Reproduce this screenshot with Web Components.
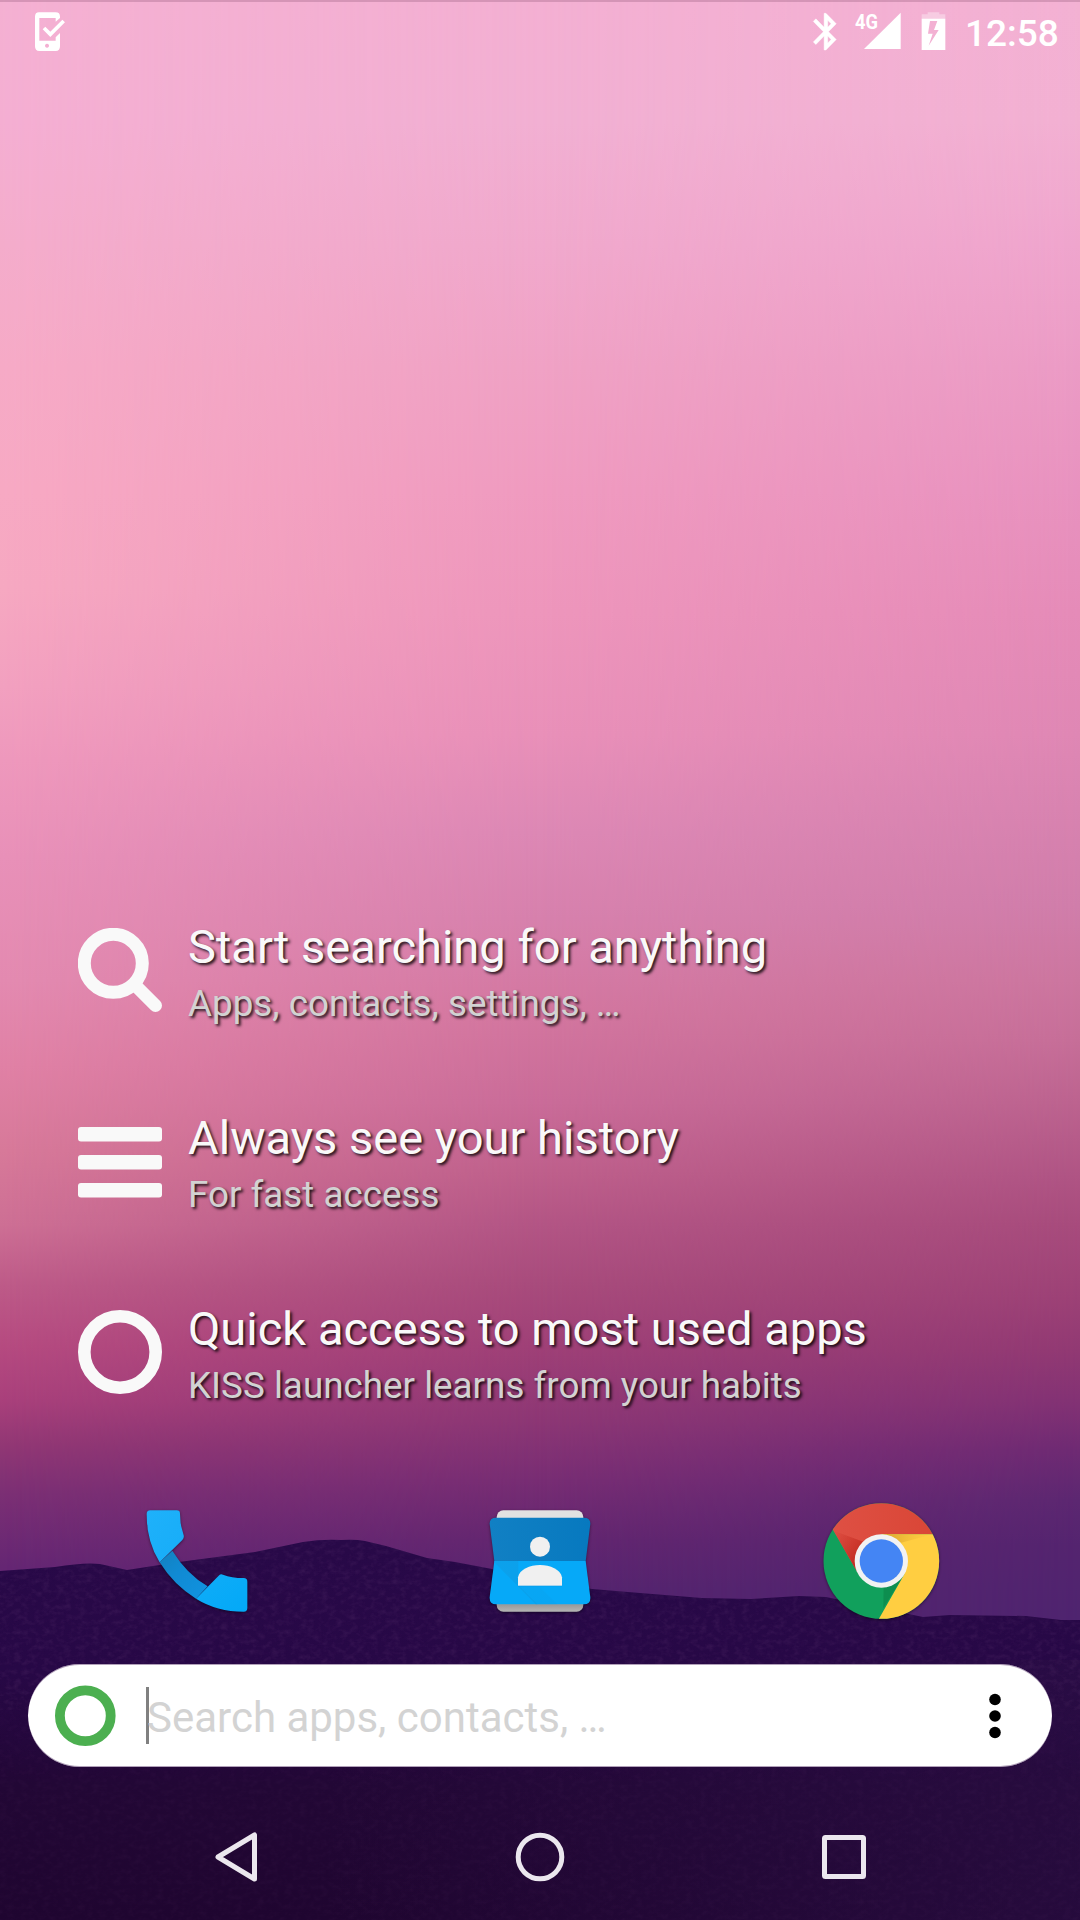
<!DOCTYPE html>
<html lang="en">
<head>
<meta charset="utf-8">
<title>KISS launcher</title>
<style>
html, body { margin: 0; padding: 0; }
body { width: 1080px; height: 1920px; overflow: hidden; font-family: Roboto, "Noto Sans", sans-serif; }
</style>
</head>
<body>
<home-screen>
  <wall-paper slot="wallpaper"></wall-paper>
  <status-bar time="12:58" network="4G"></status-bar>
  <hint-list>
    <hint-row icon="search"><span slot="title">Start searching for anything</span><span slot="detail">Apps, contacts, settings, …</span></hint-row>
    <hint-row icon="menu"><span slot="title">Always see your history</span><span slot="detail">For fast access</span></hint-row>
    <hint-row icon="ring"><span slot="title">Quick access to most used apps</span><span slot="detail">KISS launcher learns from your habits</span></hint-row>
  </hint-list>
  <app-dock></app-dock>
  <search-bar>Search apps, contacts, …</search-bar>
  <nav-bar></nav-bar>
</home-screen>
<script>
function define(name, html, fill) {
  const t = document.createElement('template');
  t.innerHTML = html;
  customElements.define(name, class extends HTMLElement {
    constructor() {
      super();
      this.attachShadow({ mode: 'open' }).appendChild(t.content.cloneNode(true));
    }
    connectedCallback() { if (fill) fill(this, this.shadowRoot); }
  });
}

define('home-screen', `
<style>
:host { display: grid; width: 1080px; height: 1920px; overflow: hidden; }
::slotted([slot=wallpaper]), .column { grid-area: 1 / 1; }
::slotted([slot=wallpaper]) { isolation: isolate; }
.column { display: flex; flex-direction: column; z-index: 1; }
</style>
<slot name="wallpaper"></slot>
<div class="column"><slot></slot></div>`);

define('wall-paper', `
<style>
:host { display: grid; width: 1080px; height: 1920px; }
.sky, svg, .edge { grid-area: 1 / 1; width: 1080px; height: 1920px; }
.mid { background: linear-gradient(180deg, #f4b0d3 0, #f2b0d3 122px, #f1a9cd 245px, #f0a2c5 367px, #f09bc0 490px, #ee96bc 612px, #e990b9 735px, #dd88b5 833px, #d781ad 918px, #d3769f 1016px, #ca6c99 1102px, #be5f8b 1176px, #b35585 1225px, #a84b7c 1286px, #9f4077 1347px, #8d3775 1420px, #782d74 1480px, #632670 1540px, #55246f 1592px); }
.left { background: linear-gradient(180deg, #f4b0d2 0, #f4aed2 122px, #f4accb 245px, #f6aac6 367px, #f7a9c3 490px, #f6a8c1 588px, #f2a0bf 686px, #ee98bc 760px, #e890b8 857px, #e38ab0 980px, #e081a5 1065px, #d77999 1151px, #cd6f94 1225px, #bd5a88 1286px, #b54a80 1347px, #a9407b 1400px, #913774 1445px, #7b2f74 1494px, #652673 1567px);
  -webkit-mask-image: linear-gradient(90deg, #000, transparent 50%); mask-image: linear-gradient(90deg, #000, transparent 50%); }
.right { background: linear-gradient(180deg, #f3b1d3 0, #f2b0d2 122px, #efa5cd 245px, #eb9bc5 367px, #e892bf 490px, #e58bb8 612px, #df87b4 735px, #d883b0 808px, #d07daa 906px, #cc769f 980px, #c66e98 1041px, #bc638f 1102px, #af5484 1176px, #a74b7c 1225px, #9c4176 1298px, #913973 1350px, #833274 1400px, #6e2a73 1450px, #5c2771 1500px, #54246f 1545px, #4f246f 1616px);
  -webkit-mask-image: linear-gradient(90deg, transparent 50%, #000); mask-image: linear-gradient(90deg, transparent 50%, #000); }
svg { z-index: 1; }
.edge { z-index: 2; height: 2px; background: rgba(90, 40, 70, .2); }
</style>
<div class="sky mid"></div><div class="sky left"></div><div class="sky right"></div>
<svg viewBox="0 0 1080 1920">
  <defs>
    <linearGradient id="g" gradientUnits="userSpaceOnUse" x1="0" y1="1540" x2="0" y2="1920">
      <stop offset="0" stop-color="#280948"/><stop offset=".35" stop-color="#270846"/><stop offset=".65" stop-color="#220735"/><stop offset="1" stop-color="#1f0530"/>
    </linearGradient>
    <linearGradient id="r" x1="0" x2="1" y1="0" y2="0">
      <stop offset=".3" stop-color="#2a0e44" stop-opacity="0"/><stop offset="1" stop-color="#2a0e44" stop-opacity=".6"/>
    </linearGradient>
    <filter id="n" x="0" y="0" width="1" height="1">
      <feTurbulence type="fractalNoise" baseFrequency=".14 .2" numOctaves="3" seed="4"/>
      <feColorMatrix values="0 0 0 0 .4  0 0 0 0 .15  0 0 0 0 .4  .9 0 0 0 -.36"/>
    </filter>
    <clipPath id="c"><path d="M0 1571L55 1567Q85 1562 100 1564L127 1570 179 1562 255 1552 303 1542Q322 1539 341 1540 355 1539 365 1541L386 1546 427 1558 455 1562 492 1569 540 1580 592 1589 640 1593 702 1598 751 1599 799 1596 826 1597 923 1617 950 1615 1026 1616 1061 1620 1080 1620V1920H0Z"/></clipPath>
  </defs>
  <g clip-path="url(#c)">
    <rect y="1530" width="1080" height="390" fill="url(#g)"/>
    <rect y="1660" width="1080" height="260" fill="url(#r)"/>
    <rect y="1530" width="1080" height="180" filter="url(#n)" opacity=".24"/>
    <rect y="1710" width="1080" height="210" filter="url(#n)" opacity=".1"/>
  </g>
</svg>
<div class="edge"></div>`);

define('status-bar', `
<style>
:host { display: flex; height: 64px; flex: none; align-items: flex-start; color: #fff; }
svg { display: block; flex: none; }
.check { margin-left: 30px; }
.gap { flex: 1; }
.bluetooth { margin-right: 7px; }
.signal { margin-right: 6px; }
.time { font-size: 37px; font-weight: 500; line-height: 44px; margin: 12px 0 0 12px; width: 115px; white-space: nowrap; }
</style>
<svg class="check" width="40" height="64" viewBox="90 0 120 192"><path fill="#fff" fill-rule="evenodd" d="M117 37H167Q180 37 180 50V54L167 65V54H118V122H167V112L180 99V139Q180 153 167 153H118Q105 153 105 139V50Q105 37 117 37ZM141 131a6 6 0 1 0 .1 0Z"/><path fill="none" stroke="#fff" stroke-width="11" d="M132 84L151 103 191 63"/></svg>
<span class="gap"></span>
<svg class="bluetooth" width="40" height="64" viewBox="75 0 120 192"><path fill="#fff" stroke="#fff" stroke-width=".25" transform="translate(73 29) scale(5.4 5.5)" d="M17.71 7.71L12 2h-1v7.59L6.41 5 5 6.41 10.59 12 5 17.59 6.41 19 11 14.41V22h1l5.71-5.71-4.3-4.29 4.3-4.29zM13 5.83l1.88 1.88L13 9.59V5.83zm1.88 10.46L13 18.17v-3.76l1.88 1.88z"/></svg>
<svg class="signal" width="55" height="64" viewBox="215 0 165 192"><path fill="#fff" d="M361 38V147H251Z"/><text id="net" x="224" y="87" fill="#fff" font-size="62" font-weight="700" textLength="69" lengthAdjust="spacingAndGlyphs" font-family="Roboto, sans-serif"></text></svg>
<svg width="40" height="64" viewBox="400 0 120 192"><path fill="#fff" opacity=".35" d="M426 57V43H444V37H479V43H497V57Z"/><path fill="#fff" fill-rule="evenodd" d="M426 56H497V150H426ZM451 63L445 101H459L447 137 477 90H463L473 63Z"/></svg>
<span class="time"></span>`, (el, r) => {
  r.querySelector('.time').textContent = el.getAttribute('time');
  r.querySelector('#net').textContent = el.getAttribute('network');
});

define('hint-list', `
<style>
:host { display: flex; flex-direction: column; flex: none; padding-top: 810px; height: 574px; }
</style><slot></slot>`);

const HINT_ICONS = {
  search: '<circle cx="35.3" cy="35.3" r="29" fill="none" stroke="#f9f9f9" stroke-width="13"/><path d="M57 57L77.5 77.5" stroke="#f9f9f9" stroke-width="13" stroke-linecap="round"/>',
  menu: '<g fill="#f9f9f9"><rect y="8" width="84" height="14.5" rx="3"/><rect y="36" width="84" height="14.5" rx="3"/><rect y="64" width="84" height="14.5" rx="3"/></g>',
  ring: '<circle cx="42" cy="42" r="35.7" fill="none" stroke="#f9f9f9" stroke-width="12.6"/>'
};
define('hint-row', `
<style>
:host { display: flex; align-items: center; height: 191px; padding-left: 78px; box-sizing: border-box; }
svg { display: block; flex: none; width: 84px; height: 84px; }
.text { display: flex; flex-direction: column; gap: 6px; margin-left: 26px; padding-top: 5px; white-space: nowrap; text-shadow: 2px 2px 3px rgba(0,0,0,.85); }
.title { font-size: 47.05px; line-height: 56px; color: #f9f9f9; }
.detail { font-size: 36.8px; line-height: 45px; color: #d2d2d2; }
</style>
<svg viewBox="0 0 84 84"></svg>
<div class="text"><div class="title"><slot name="title"></slot></div><div class="detail"><slot name="detail"></slot></div></div>`,
(el, r) => { r.querySelector('svg').innerHTML = HINT_ICONS[el.getAttribute('icon')]; });

define('app-dock', `
<style>
:host { display: flex; flex: none; height: 184px; padding: 32px 120px 0; box-sizing: border-box; justify-content: space-between; }
svg { display: block; filter: drop-shadow(0 1px 1.5px rgba(0,0,0,.45)); }
</style>
<svg width="160" height="150" viewBox="0 0 480 450">
  <defs>
    <linearGradient id="a" x1="0" y1="0" x2="1" y2="1"><stop offset="0" stop-color="#1fb1fa"/><stop offset="1" stop-color="#16adf8"/></linearGradient>
    <linearGradient id="a2" x1="0" y1="0" x2="1" y2="1"><stop offset="0" stop-color="#10acf8"/><stop offset="1" stop-color="#03a9f7"/></linearGradient>
    <linearGradient id="b" x1="0" y1="0" x2="1" y2="1"><stop offset="0" stop-color="#1480be"/><stop offset=".4" stop-color="#108ad3"/><stop offset="1" stop-color="#1193e0"/></linearGradient>
  </defs>
  <path fill="url(#b)" d="M157 212Q200 282 263 319L228 356Q161 315 119 247Z"/>
  <path fill="url(#a)" d="M91 91H170Q180 91 180 101Q180 136 191 166Q193 173 187 180L119 247Q80 185 80 102Q80 91 91 91Z"/>
  <path fill="url(#a2)" d="M228 356L296 287Q302 281 309 284Q335 294 371 294Q382 294 382 305V384Q382 395 371 395Q291 395 228 356Z"/>
</svg>
<svg width="140" height="150" viewBox="0 0 420 450">
  <defs>
    <linearGradient id="d" x1="0" y1="0" x2="1" y2="0"><stop offset="0" stop-color="#1180c4"/><stop offset="1" stop-color="#0779bf"/></linearGradient>
    <linearGradient id="e" x1="0" y1="0" x2="0" y2="1"><stop offset=".87" stop-color="#9c9c9c"/><stop offset="1" stop-color="#b5b5b5"/></linearGradient>
    <linearGradient id="s" x1="0" y1="0" x2=".8" y2="1"><stop offset="0" stop-color="#0e9fe8"/><stop offset="1" stop-color="#0a9fe9"/></linearGradient>
  </defs>
  <rect x="80" y="250" width="260" height="145" rx="20" fill="url(#e)"/>
  <rect x="80" y="91" width="260" height="100" rx="20" fill="#e1e1e1"/>
  <path fill="url(#d)" d="M78 113H342Q362 113 361 132L347 243H73L59 132Q58 113 78 113Z"/>
  <path fill="#06a9f8" d="M73 243H347L361 352Q362 373 342 373H78Q58 373 59 352Z"/>
  <path fill="url(#s)" d="M73 243H145V316L203 373H197L73 247Z" opacity=".8"/>
  <path fill="url(#s)" d="M145 316H204L262 373H203Z" opacity=".3"/>
  <circle cx="210" cy="200" r="30" fill="#f0f0f0"/>
  <path fill="#f0f0f0" d="M144 317V292C148 268 180 255 210 255S272 268 276 292V317Z"/>
  <path fill="#0779bf" opacity=".35" d="M144 317H276V319H144Z"/>
</svg>
<svg width="160" height="150" viewBox="0 0 480 450">
  <defs>
    <linearGradient id="f" x1="0" y1="0" x2="1" y2="0"><stop offset="0" stop-color="#df5145"/><stop offset="1" stop-color="#d94535"/></linearGradient>
    <linearGradient id="h" x1="0" y1="0" x2="1" y2="1"><stop offset="0" stop-color="#c5281e" stop-opacity="0"/><stop offset="1" stop-color="#b9241a"/></linearGradient>
    <linearGradient id="i" x1="0" y1="0" x2="1" y2="0"><stop offset="0" stop-color="#d9a22c"/><stop offset="1" stop-color="#ffce41" stop-opacity=".3"/></linearGradient>
    <clipPath id="k"><circle cx="244" cy="243" r="173.5"/></clipPath>
  </defs>
  <g clip-path="url(#k)">
    <rect x="60" y="60" width="370" height="370" fill="#11a05c"/>
    <path fill="url(#f)" d="M99 150L60 60H430V163H244L173 278Z"/>
    <path fill="#ffce41" d="M244 163H430V430H229L313 283Z"/>
    <path fill="url(#h)" d="M101 152L190 185 165 264Z"/>
    <path fill="url(#i)" d="M250 163H398L298 190Z"/>
    <path fill="#0b8246" opacity=".6" d="M304 297L250 385 251 318Z"/>
  </g>
  <circle cx="244" cy="243" r="80" fill="#f2f2f2"/>
  <circle cx="244" cy="243" r="65" fill="#4485f4"/>
</svg>`);

define('search-bar', `
<style>
:host { display: flex; flex: none; align-items: center; width: 1024px; height: 103px; margin: 32px 28px 0; border-radius: 51.5px; background: #fff; box-sizing: border-box; padding-left: 27px; box-shadow: inset 0 1px 0 rgba(60,20,80,.4), inset 0 -1px 0 rgba(60,20,80,.4); }
svg { display: block; flex: none; }
.caret { width: 3px; height: 57px; margin-left: 30px; background: #808080; }
.hint { flex: 1; font-size: 42px; line-height: 50px; color: #d3d3d3; margin: 4px 0 0 -2px; white-space: nowrap; }
.more { margin-right: 37px; }
</style>
<svg width="61" height="61" viewBox="0 0 61 61"><circle cx="30.3" cy="30.7" r="25.4" fill="none" stroke="#4caf50" stroke-width="9.8"/></svg>
<div class="caret"></div><div class="hint"><slot></slot></div>
<svg class="more" width="40" height="60" viewBox="0 0 40 60"><circle cx="20" cy="13.5" r="5.8"/><circle cx="20" cy="30" r="5.8"/><circle cx="20" cy="46.5" r="5.8"/></svg>`);

define('nav-bar', `
<style>
:host { display: flex; flex: none; height: 126px; margin-top: 27px; padding: 0 206px; align-items: center; justify-content: space-between; }
svg { display: block; fill: none; stroke: #ebe7ee; stroke-width: 5; stroke-linejoin: round; }
</style>
<svg width="60" height="60" viewBox="0 0 60 60"><path d="M48.5 8V52L12 30Z"/></svg>
<svg width="60" height="60" viewBox="0 0 60 60"><circle cx="30" cy="30" r="21.8"/></svg>
<svg width="60" height="60" viewBox="0 0 60 60"><rect x="10.5" y="10.5" width="39" height="39" rx="1"/></svg>`);
</script>
</body>
</html>
